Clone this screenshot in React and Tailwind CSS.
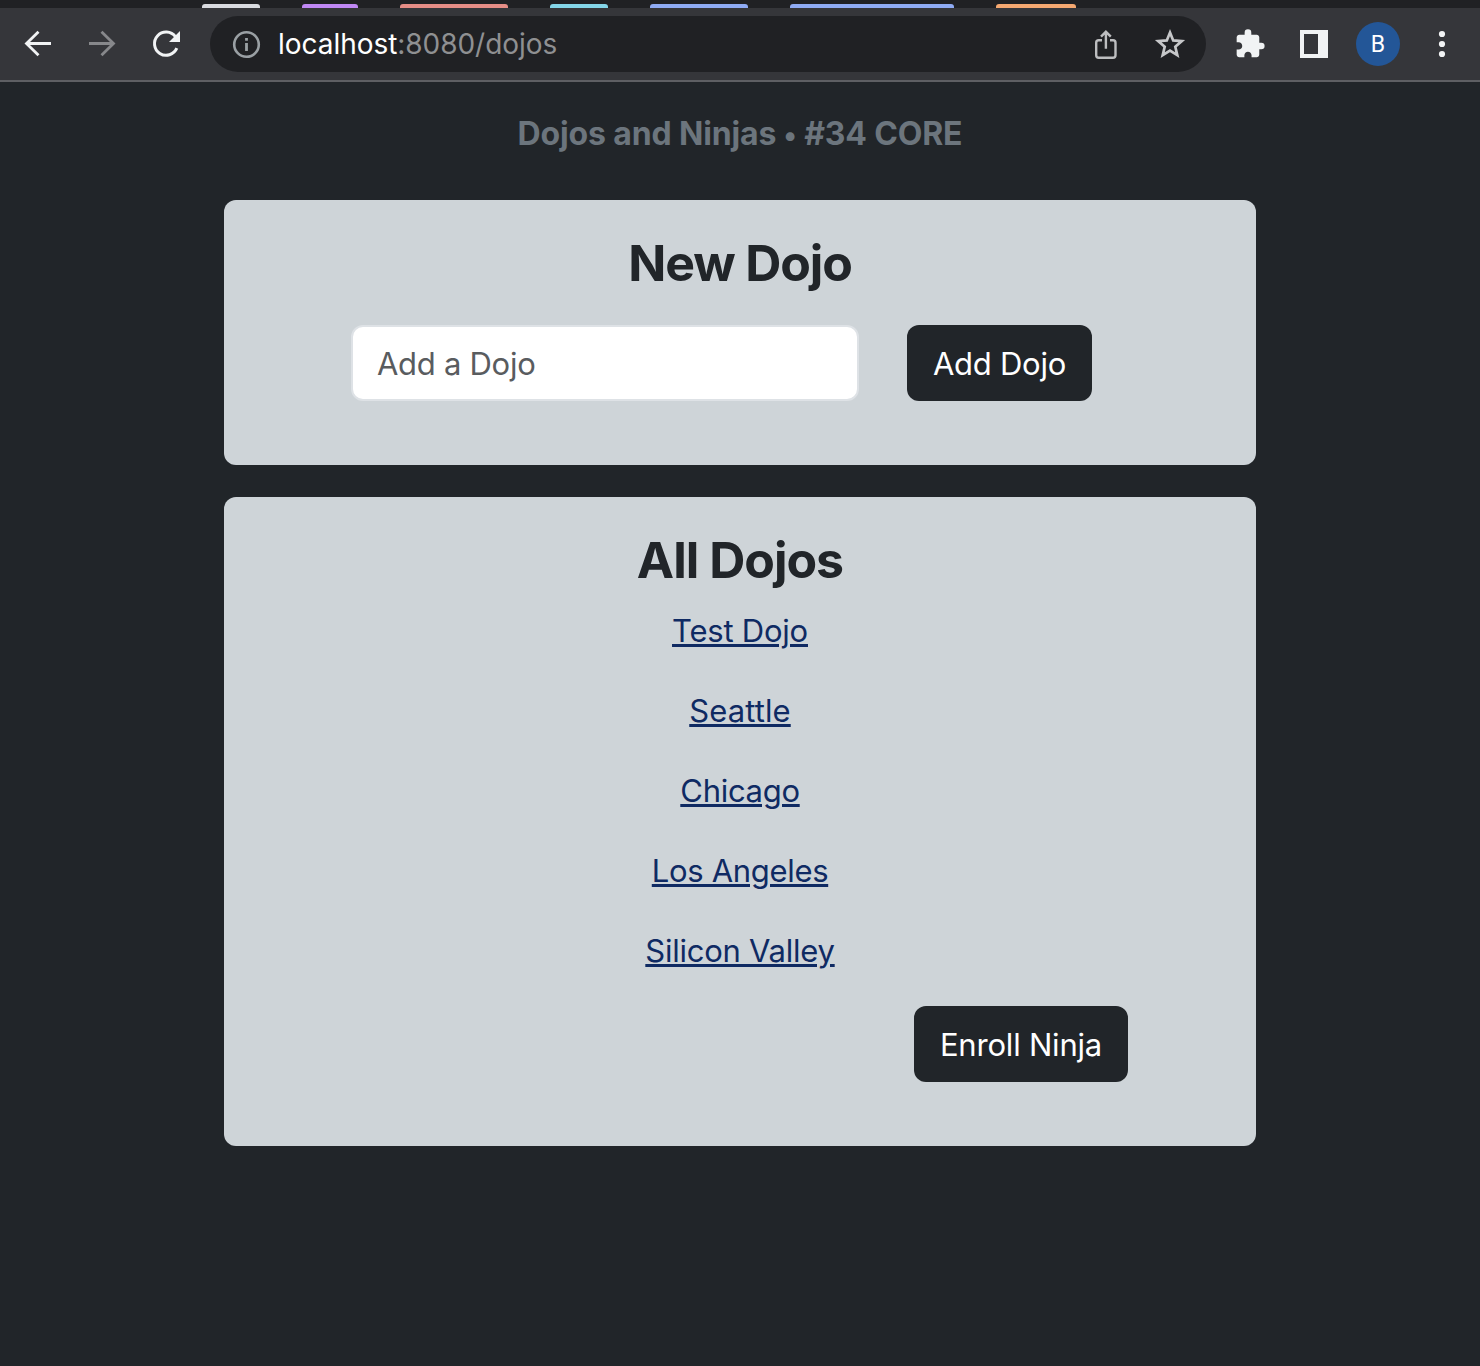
const GROUPS = [
  "ml-[202px] w-[58px] bg-[#d9dbe0]",
  "ml-[42px] w-[56px] bg-[#c088f5]",
  "ml-[42px] w-[108px] bg-[#e68d86]",
  "ml-[42px] w-[58px] bg-[#84d5e8]",
  "ml-[42px] w-[98px] bg-[#8fabf4]",
  "ml-[42px] w-[164px] bg-[#8fabf4]",
  "ml-[42px] w-[80px] bg-[#f5a871]",
];

const DOJOS = [
  { name: "Test Dojo", tracking: "tracking-[-0.22px]" },
  { name: "Seattle", tracking: "tracking-[0.1px]" },
  { name: "Chicago", tracking: "tracking-[-0.3px]" },
  { name: "Los Angeles", tracking: "tracking-[-0.32px]" },
  { name: "Silicon Valley", tracking: "tracking-[-0.25px]" },
];

function Icon({ className, children }) {
  return (
    <svg viewBox="0 0 32 32" className={`size-8 shrink-0 ${className}`} fill="none" stroke="currentColor">
      {children}
    </svg>
  );
}

function Toolbar() {
  return (
    <header className="bg-[#202124]">
      <div className="flex h-2 items-end">
        {GROUPS.map((g, i) => (
          <span key={i} className={`h-1 shrink-0 rounded-t-[3px] ${g}`} />
        ))}
      </div>
      <div className="flex h-[74px] items-center border-b-2 border-[#5e5f63] bg-[#35363a]">
        <Icon className="ml-[22px] text-[#f1f3f4]">
          <path d="M29 15.5H4.5M16.5 3.8L4.500 15.5L16.5 27.2" strokeWidth="2.8" />
        </Icon>
        <Icon className="ml-8 text-[#87888b]">
          <path d="M3 15.5H27.5M15.5 3.8L27.5 15.5L15.5 27.2" strokeWidth="2.8" />
        </Icon>
        <Icon className="ml-8 text-[#f1f3f4]">
          <path d="M25.4 8.700A11.6 11.6 0 1 0 26.8 20.2" strokeWidth="3" />
          <path d="M30 3V14H19Z" fill="currentColor" stroke="none" />
        </Icon>
        <div className="ml-[28px] flex h-14 w-[996px] shrink-0 items-center rounded-full bg-[#202124] pl-5">
          <Icon className="text-[#9aa0a4]">
            <circle cx="16.5" cy="16.5" r="12.3" strokeWidth="2.6" />
            <path d="M16.5 15V23M16.5 10V12.8" strokeWidth="2.8" />
          </Icon>
          <span className="ml-4 text-[28px] leading-8 tracking-[-0.04px] whitespace-pre text-[#8f9092]">
            <span className="text-white">localhost</span>:8080/dojos
          </span>
          <Icon className="ml-auto text-[#bdbec0]">
            <path
              d="M12 12.2H8.700Q6.200 12.2 6.200 14.7V27.2Q6.200 29.7 8.700 29.7H23Q25.5 29.7 25.5 27.2V14.7Q25.5 12.200 23 12.2H20M15.900 20.8V4.500M11 8.700L15.900 3.800L20.800 8.700"
              strokeWidth="2.4"
            />
          </Icon>
          <Icon className="mr-5 ml-8 text-[#c6c7c9]">
            <path d="M16 4.600L19.200 12.400L27.800 13.100L21.300 18.700L23.300 27.100L16 22.600L8.700 27.100L10.700 18.700L4.200 13.100L12.800 12.400Z" strokeWidth="2.7" />
          </Icon>
        </div>
        <Icon className="ml-[28px] text-[#f1f3f4]">
          <g transform="scale(1.33)">
            <path
              fill="currentColor"
              stroke="none"
              d="M20.5 11H19V7c0-1.1-.9-2-2-2h-4V3.500a2.500 2.500 0 0 0-5 0V5H4c-1.100 0-1.990.9-1.990 2v3.800H3.500c1.490 0 2.700 1.210 2.700 2.700s-1.210 2.700-2.700 2.700H2V20c0 1.100.9 2 2 2h3.800v-1.500c0-1.490 1.210-2.700 2.700-2.700s2.700 1.210 2.700 2.700V22H17c1.100 0 2-.9 2-2v-4h1.500a2.500 2.500 0 0 0 0-5z"
            />
          </g>
        </Icon>
        <Icon className="ml-8 text-[#f1f3f4]">
          <path d="M2 2H30V30H2ZM6 6V26H20V6Z" fill="currentColor" fillRule="evenodd" stroke="none" />
        </Icon>
        <span className="ml-[26px] flex size-11 shrink-0 items-center justify-center rounded-full bg-[#235697] pt-px font-[Roboto] text-[23px] text-white">
          B
        </span>
        <Icon className="ml-[26px] text-[#f1f3f4]">
          <g fill="currentColor" stroke="none">
            <circle cx="16" cy="6" r="3.100" />
            <circle cx="16" cy="16" r="3.100" />
            <circle cx="16" cy="26" r="3.100" />
          </g>
        </Icon>
      </div>
    </header>
  );
}

export default function App() {
  return (
    <div className="flex h-[1366px] w-[1480px] flex-col overflow-hidden bg-[#212529] font-[Inter,sans-serif] text-[31px] leading-[48px]">
      <Toolbar />
      <main className="mx-auto flex w-[1032px] flex-col pt-7 text-center text-[#212529]">
        <p className="text-[32px] leading-[48px] font-bold tracking-[-0.15px] text-[#6c757d]">
          Dojos and Ninjas <span className="text-[28px] leading-none">•</span> #34 CORE
        </p>

        <section className="mt-[42px] flex h-[265px] flex-col rounded-xl bg-[#ced4d8] pt-[33px]">
          <h2 className="text-[50px] leading-[60px] font-bold tracking-[-1.1px]">New Dojo</h2>
          <form className="mt-8 flex pl-[127px]" onSubmit={(e) => e.preventDefault()}>
            <input
              type="text"
              placeholder="Add a Dojo"
              className="h-[76px] w-[508px] rounded-xl border-2 border-[#dee2e6] bg-white px-6 pt-px tracking-[-0.28px] placeholder:text-[#595c5f]"
            />
            <button className="ml-12 h-[76px] w-[185px] rounded-xl bg-[#212529] pt-0.5 tracking-[-0.25px] text-white">
              Add Dojo
            </button>
          </form>
        </section>

        <section className="mt-8 flex h-[649px] flex-col rounded-xl bg-[#ced4d8] pt-[33px]">
          <h2 className="text-[50px] leading-[60px] font-bold tracking-[-1px]">All Dojos</h2>
          <ul className="mt-[17px] flex flex-col gap-8">
            {DOJOS.map((d) => (
              <li key={d.name}>
                <a
                  href="#"
                  className={`text-[#0f2a63] underline decoration-[3px] underline-offset-2 ${d.tracking}`}
                >
                  {d.name}
                </a>
              </li>
            ))}
          </ul>
          <button className="mt-[31px] mr-32 h-[76px] w-[214px] self-end rounded-xl bg-[#212529] pt-0.5 tracking-[-0.2px] text-white">
            Enroll Ninja
          </button>
        </section>
      </main>
    </div>
  );
}
